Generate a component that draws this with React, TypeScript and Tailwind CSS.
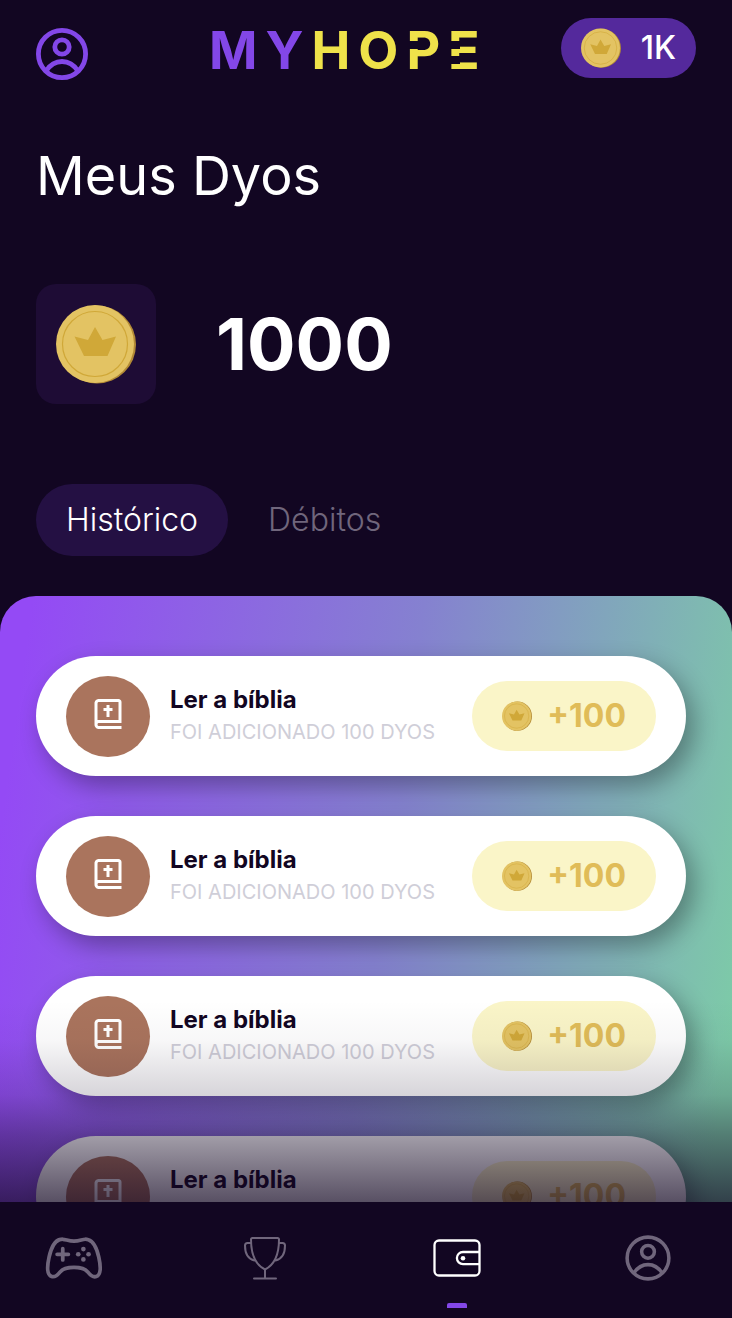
import type { ReactNode } from "react";
import { BiBible } from "react-icons/bi";
import { IoGameControllerOutline } from "react-icons/io5";

function Coin({ className }: { className: string }) {
  return (
    <svg viewBox="0 0 80 80" className={className} aria-hidden="true">
      <circle cx="41" cy="40.5" r="39" fill="#b28a35" />
      <circle cx="39" cy="40" r="39" fill="#e3c363" />
      <circle cx="39" cy="40" r="32.5" fill="none" stroke="#d0a838" strokeWidth="1.2" />
      <path d="M39 23 46.500 36 60 32.500 51.500 52H28L18.500 32.500 32 36Z" fill="#d0a838" />
    </svg>
  );
}

function AccountIcon({ className, stroke }: { className: string; stroke: number }) {
  return (
    <svg viewBox="0 0 52 52" className={className} fill="none" stroke="currentColor" strokeWidth={stroke} aria-hidden="true">
      <circle cx="26" cy="26" r="23.6" />
      <circle cx="26" cy="19" r="7.2" />
      <path d="M10 43c4-6 9.500-9.500 16-9.500S38 37 42 43" />
    </svg>
  );
}

function TrophyIcon() {
  return (
    <svg viewBox="0 0 44 44" className="size-11" fill="none" stroke="currentColor" strokeWidth="2" strokeLinecap="round" strokeLinejoin="round" aria-hidden="true">
      <path d="M8 3.500Q8 2 9.500 2h25Q36 2 36 3.500C36 18 31 29 22 33.500 13 29 8 18 8 3.500Z" />
      <path d="M8 7H4.500Q2 7 2 9.500C2 17 5 23 11.500 24.500M36 7h3.500Q42 7 42 9.500C42 17 39 23 32.500 24.500" />
      <path d="M22 33.500V42M11 42.500h22" />
    </svg>
  );
}

function WalletIcon() {
  return (
    <svg viewBox="0 0 48 38" className="h-[38px] w-12" fill="none" stroke="currentColor" strokeWidth="2.300" aria-hidden="true">
      <rect x="1.500" y="1.500" width="45" height="35" rx="4.500" />
      <path d="M46.500 13H30a6 6 0 0 0 0 12.200h16.500" />
      <circle cx="30" cy="19.200" r="2.300" fill="currentColor" stroke="none" />
    </svg>
  );
}

function Logo() {
  return (
    <p className="flex gap-2 text-[52px] leading-[56px] font-bold text-[#efe24a]" aria-label="MYHOPE">
      <span className="text-[#8347e8]">M</span>
      <span className="text-[#8347e8]">Y</span>
      <span>H</span>
      <span>O</span>
      <span className="relative">
        P<i className="absolute top-[18px] left-0 h-2 w-3 bg-[#120622]" />
      </span>
      <span className="relative">
        E
        <i className="absolute top-[18px] left-0 h-2 w-3 bg-[#120622]" />
        <i className="absolute top-[33px] left-0 h-2 w-3 bg-[#120622]" />
      </span>
    </p>
  );
}

const entries = [1, 2, 3, 4].map((id) => ({
  id,
  title: "Ler a bíblia",
  detail: "FOI ADICIONADO 100 DYOS",
  amount: "+100",
}));

function Entry({ title, detail, amount }: { title: string; detail: string; amount: string }) {
  return (
    <li className="flex h-[120px] shrink-0 items-center gap-5 rounded-full bg-white px-[30px] shadow-[8px_10px_24px_rgba(0,0,0,0.32)]">
      <span className="flex h-[81px] w-[84px] shrink-0 items-center justify-center rounded-[50%] bg-[#aa745d] pb-1 text-white">
        <BiBible className="size-9" aria-hidden="true" />
      </span>
      <div className="min-w-0 flex-1 whitespace-nowrap">
        <h2 className="text-2xl leading-8 font-bold text-[#120622]">{title}</h2>
        <p className="text-xl leading-8 text-[#cfced8]">{detail}</p>
      </div>
      <span className="flex h-[70px] w-[184px] shrink-0 items-center justify-between rounded-full bg-[#faf5c8] px-[30px] text-[32px] font-bold text-[#e0bc58]">
        <Coin className="size-[30px]" />
        {amount}
      </span>
    </li>
  );
}

function NavItem({ label, active, children }: { label: string; active?: boolean; children: ReactNode }) {
  return (
    <a
      href="#"
      aria-label={label}
      aria-current={active ? "page" : undefined}
      className={active ? "relative flex size-[60px] items-center justify-center text-white" : "flex size-[60px] items-center justify-center text-[#70667c]"}
    >
      {children}
      {active && <span className="absolute top-[75px] h-[5px] w-5 rounded-t-xs bg-[#8347e8]" />}
    </a>
  );
}

export default function App() {
  return (
    <div className="flex h-screen flex-col overflow-hidden bg-[#120622] font-['Inter',sans-serif] text-white">
      <header className="flex h-20 shrink-0 items-center px-9 pt-[18px]">
        <button type="button" aria-label="Perfil" className="self-end text-[#8347e8]">
          <AccountIcon className="size-[52px]" stroke={4.8} />
        </button>
        <div className="flex flex-1 justify-center pt-1 pl-10">
          <Logo />
        </div>
        <div className="flex h-[60px] items-center gap-5 self-start rounded-full bg-[#54299c] px-5 text-[32px] font-medium">
          <Coin className="size-10" />
          1K
        </div>
      </header>

      <main className="flex min-h-0 flex-1 flex-col">
        <h1 className="mt-16 px-9 text-[54px] leading-[64px]">Meus Dyos</h1>

        <div className="mt-[76px] flex items-center gap-[60px] px-9">
          <div className="flex size-[120px] items-center justify-center rounded-[20px] bg-[#1e0c35]">
            <Coin className="size-20" />
          </div>
          <strong className="text-7xl font-bold">1000</strong>
        </div>

        <div className="mt-20 flex gap-10 px-9 text-[32px] font-light">
          <button type="button" className="h-[72px] rounded-full bg-[#241043] px-[30px]">
            Histórico
          </button>
          <button type="button" className="h-[72px] text-[#70667c]">
            Débitos
          </button>
        </div>

        <section className="relative mt-10 min-h-0 flex-1 overflow-hidden rounded-t-[36px] bg-linear-[98deg,#944af5_4%,#8581d0_52%,#7dcaa8_97%]">
          <ul className="flex flex-col gap-10 pt-[60px] pr-[46px] pl-9">
            {entries.map((e) => (
              <Entry key={e.id} title={e.title} detail={e.detail} amount={e.amount} />
            ))}
          </ul>
          <div className="pointer-events-none absolute inset-x-0 bottom-0 h-[202px] bg-linear-[180deg,#12062200,#12062208_20%,#1206222b_47%,#12062264_67%,#120622b3]" />
        </section>
      </main>

      <nav className="flex h-[116px] shrink-0 items-start justify-between pt-[26px] pr-[54px] pl-11">
        <NavItem label="Jogos">
          <IoGameControllerOutline className="size-[60px]" />
        </NavItem>
        <NavItem label="Troféus">
          <TrophyIcon />
        </NavItem>
        <NavItem label="Carteira" active>
          <WalletIcon />
        </NavItem>
        <NavItem label="Conta">
          <AccountIcon className="size-[46px]" stroke={4} />
        </NavItem>
      </nav>
    </div>
  );
}
